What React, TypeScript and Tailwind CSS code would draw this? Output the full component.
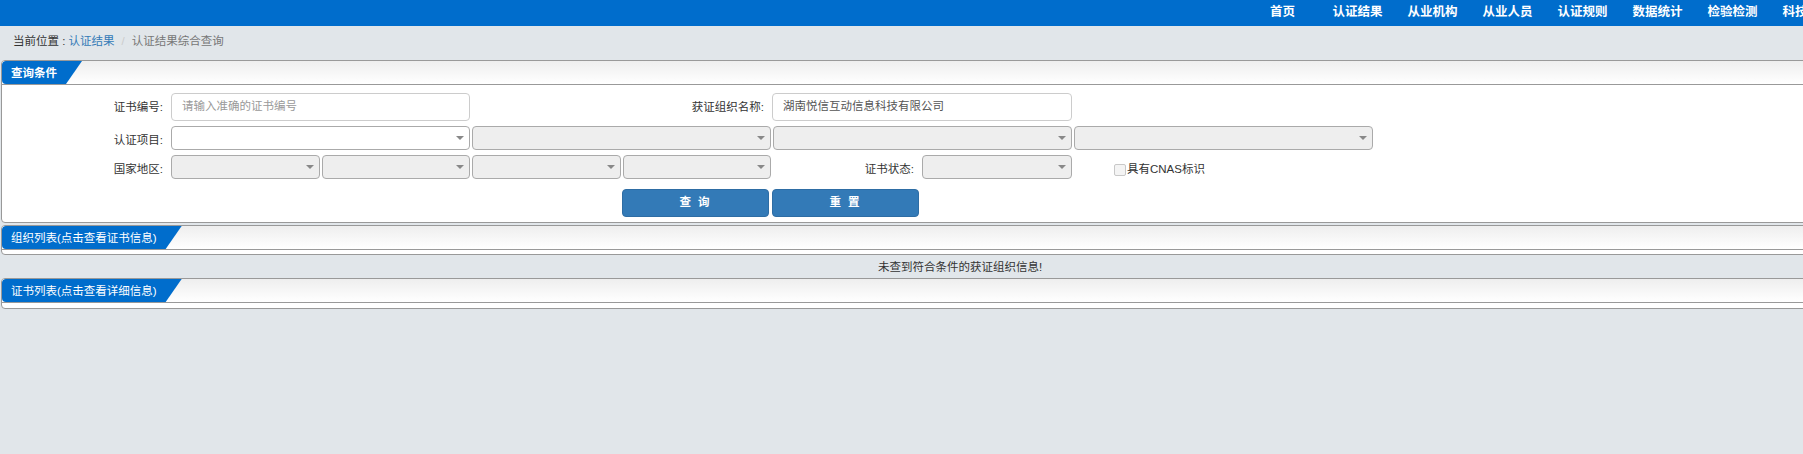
import React from "react";

function Arrow() {
  return (
    <span className="w-0 h-0 border-l-[4px] border-r-[4px] border-t-[4px] border-l-transparent border-r-transparent border-t-[#888]" />
  );
}

function Sel({ w, white }: { w: string; white?: boolean }) {
  return (
    <div
      className={`${w} h-[24px] shrink-0 border border-[#aaa] rounded-[4px] flex items-center justify-end pr-[5px] ${
        white ? "bg-white" : "bg-[#eee]"
      }`}
    >
      <Arrow />
    </div>
  );
}

function Panel({
  title,
  bold,
  children,
}: {
  title: string;
  bold?: boolean;
  children?: React.ReactNode;
}) {
  return (
    <div className="mx-px border border-[#999] rounded-[4px] bg-white overflow-hidden">
      <div className="h-[24px] border-b border-[#999] bg-linear-to-b from-[#eeeeee] to-white flex">
        <div
          className={`h-full bg-[#006dcc] pl-[9px] pr-[25px] rounded-l-[4px] [clip-path:polygon(0_0,100%_0,calc(100%_-_16px)_100%,0_100%)] text-white text-[11.5px] leading-[24px] whitespace-nowrap ${
            bold ? "font-bold" : ""
          }`}
        >
          {title}
        </div>
      </div>
      {children}
    </div>
  );
}

const navItems = [
  "首页",
  "认证结果",
  "从业机构",
  "从业人员",
  "认证规则",
  "数据统计",
  "检验检测",
  "科技服务",
  "关于我们",
];

export default function App() {
  return (
    <div className="w-full h-screen overflow-hidden bg-[#e1e6ea] font-['Liberation_Sans','Noto_Sans_CJK_SC',sans-serif] text-[#333]">
      <div className="w-[1920px]">
        {/* top nav */}
        <div className="h-[26px] bg-[#006dcc] flex justify-end">
          {navItems.map((n) => (
            <div
              key={n}
              className="w-[75px] text-center text-white font-bold text-[12.5px] leading-[24px] whitespace-nowrap"
            >
              {n}
            </div>
          ))}
        </div>

        {/* breadcrumb */}
        <div className="h-[34px] pt-[7px] pl-[13px] text-[11.5px] leading-[16px] whitespace-nowrap">
          <span className="text-[#333]">当前位置 : </span>
          <span className="text-[#337ab7]">认证结果</span>
          <span className="text-[#ccc] px-[7px]">/</span>
          <span className="text-[#777]">认证结果综合查询</span>
        </div>

        {/* query panel */}
        <Panel title="查询条件" bold>
          <div className="pt-[8px] pb-[5px] text-[11.5px]">
            {/* row 1 */}
            <div className="h-[28px] flex items-center">
              <div className="w-[161px] text-right translate-y-[1px]">证书编号:</div>
              <div className="ml-[8px] w-[299px] h-[28px] border border-[#ccc] rounded-[4px] flex items-center pl-[10px] text-[#999]">
                请输入准确的证书编号
              </div>
              <div className="w-[294px] text-right translate-y-[1px]">获证组织名称:</div>
              <div className="ml-[8px] w-[300px] h-[28px] border border-[#ccc] rounded-[4px] flex items-center pl-[10px] text-[#555]">
                湖南悦信互动信息科技有限公司
              </div>
            </div>
            {/* row 2 */}
            <div className="mt-[5px] h-[24px] flex items-center">
              <div className="w-[161px] text-right translate-y-[3px]">认证项目:</div>
              <div className="ml-[8px] flex gap-[2px]">
                <Sel w="w-[299px]" white />
                <Sel w="w-[299px]" />
                <Sel w="w-[299px]" />
                <Sel w="w-[299px]" />
              </div>
            </div>
            {/* row 3 */}
            <div className="mt-[5px] h-[24px] flex items-center">
              <div className="w-[161px] text-right translate-y-[3px]">国家地区:</div>
              <div className="ml-[8px] flex gap-[2px]">
                <Sel w="w-[149px]" />
                <Sel w="w-[148px]" />
                <Sel w="w-[149px]" />
                <Sel w="w-[148px]" />
              </div>
              <div className="w-[143px] text-right translate-y-[3px]">证书状态:</div>
              <div className="ml-[8px]">
                <Sel w="w-[150px]" />
              </div>
              <div className="ml-[42px] mt-[6px] flex items-center">
                <span className="w-[12px] h-[12px] border border-[#c8c8c8] rounded-[2px] bg-[#f4f4f4]" />
                <span className="ml-px">具有CNAS标识</span>
              </div>
            </div>
            {/* buttons */}
            <div className="mt-[10px] h-[28px] flex gap-[3px] pl-[620px]">
              <button className="w-[147px] h-[28px] bg-[#337ab7] border border-[#2e6da4] rounded-[4px] text-white font-bold text-[11.5px] tracking-[2px]">
                查 询
              </button>
              <button className="w-[147px] h-[28px] bg-[#337ab7] border border-[#2e6da4] rounded-[4px] text-white font-bold text-[11.5px] tracking-[2px]">
                重 置
              </button>
            </div>
          </div>
        </Panel>

        {/* org list */}
        <div className="mt-[2px]">
          <Panel title="组织列表(点击查看证书信息)">
            <div className="h-[4px]" />
          </Panel>
        </div>

        <div className="h-[23px] pt-px text-center text-[11.5px] leading-[23px] text-[#333]">
          未查到符合条件的获证组织信息!
        </div>

        {/* cert list */}
        <Panel title="证书列表(点击查看详细信息)">
          <div className="h-[5px]" />
        </Panel>
      </div>
    </div>
  );
}
